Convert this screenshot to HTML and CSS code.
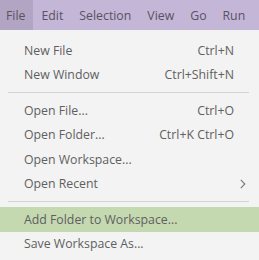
FILE: index.html
```
<!DOCTYPE html>
<html>
<head>
<meta charset="utf-8">
<title>File menu</title>
<link rel="stylesheet" href="styles.css">
</head>
<body>
<div class="menubar">
  <span class="mb-item active">File</span>
  <span class="mb-item">Edit</span>
  <span class="mb-item">Selection</span>
  <span class="mb-item">View</span>
  <span class="mb-item">Go</span>
  <span class="mb-item">Run</span>
</div>
<div class="menu">
  <div class="item"><span>New File</span><span class="key">Ctrl+N</span></div>
  <div class="item"><span>New Window</span><span class="key">Ctrl+Shift+N</span></div>
  <div class="sep"></div>
  <div class="item"><span>Open File...</span><span class="key">Ctrl+O</span></div>
  <div class="item"><span>Open Folder...</span><span class="key">Ctrl+K Ctrl+O</span></div>
  <div class="item"><span>Open Workspace...</span></div>
  <div class="item"><span>Open Recent</span>
    <svg class="chev" width="6" height="10" viewBox="0 0 6 10"><path d="M0.8 0.8 L4.8 5 L0.8 9.2" fill="none" stroke="#777" stroke-width="1.1"/></svg>
  </div>
  <div class="sep"></div>
  <div class="item hl"><span>Add Folder to Workspace...</span></div>
  <div class="item"><span>Save Workspace As...</span></div>
</div>
</body>
</html>
```
FILE: styles.css
```
* { box-sizing: border-box; }
body {
  margin: 0;
  background: #f3f3f3;
  font-family: "Segoe UI", "Open Sans", "Noto Sans", sans-serif;
  font-size: 12.3px;
  color: #5f5f5f;
  overflow: hidden;
}

.menubar {
  display: flex;
  height: 30px;
  background: #c4b6d7;
  color: #5a5262;
  font-size: 12.3px;
}
.mb-item {
  display: flex;
  align-items: center;
  padding: 0 8px 0 6px;
  margin-right: 2px;
}
.mb-item.active { background: #b2a5c4; }

.menu { padding-top: 8px; }
.item {
  display: flex;
  align-items: center;
  justify-content: space-between;
  height: 24.5px;
  padding: 0 25px 0 24px;
  position: relative;
}
.item.hl { background: #c5d9b1; }
.key { color: #606060; }
.chev { position: absolute; right: 13px; top: 7px; }

.sep {
  height: 1px;
  background: #d3d3d3;
  margin: 5px 10px 5px 8px;
}
```
